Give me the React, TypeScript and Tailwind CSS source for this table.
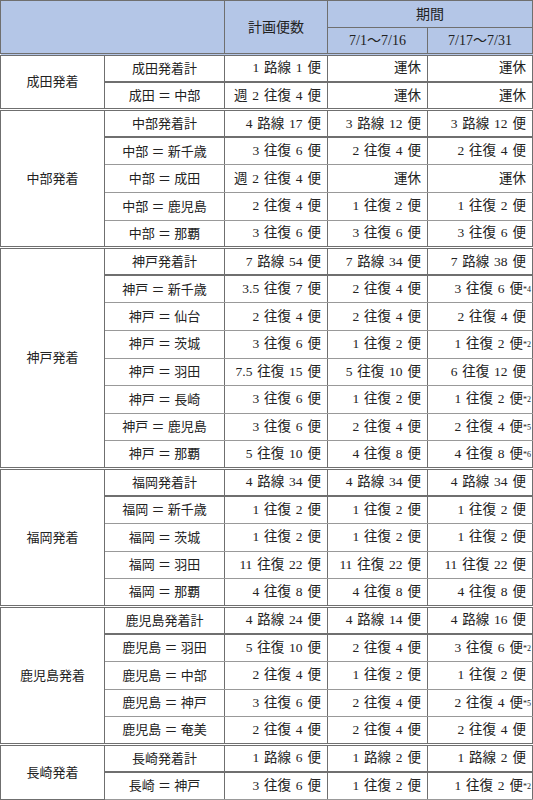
type Row = {
    route: string;
    plan: string;
    p1: string;
    p2: string;
    note?: string;
    total?: boolean;
};

type Group = {
    name: string;
    rows: Row[];
};

const groups: Group[] = [
    {
        name: "成田発着",
        rows: [
            { route: "成田発着計", plan: "1 路線 1 便", p1: "運休", p2: "運休", total: true },
            { route: "成田 ＝ 中部", plan: "週 2 往復 4 便", p1: "運休", p2: "運休" },
        ],
    },
    {
        name: "中部発着",
        rows: [
            { route: "中部発着計", plan: "4 路線 17 便", p1: "3 路線 12 便", p2: "3 路線 12 便", total: true },
            { route: "中部 ＝ 新千歳", plan: "3 往復 6 便", p1: "2 往復 4 便", p2: "2 往復 4 便" },
            { route: "中部 ＝ 成田", plan: "週 2 往復 4 便", p1: "運休", p2: "運休" },
            { route: "中部 ＝ 鹿児島", plan: "2 往復 4 便", p1: "1 往復 2 便", p2: "1 往復 2 便" },
            { route: "中部 ＝ 那覇", plan: "3 往復 6 便", p1: "3 往復 6 便", p2: "3 往復 6 便" },
        ],
    },
    {
        name: "神戸発着",
        rows: [
            { route: "神戸発着計", plan: "7 路線 54 便", p1: "7 路線 34 便", p2: "7 路線 38 便", total: true },
            { route: "神戸 ＝ 新千歳", plan: "3.5 往復 7 便", p1: "2 往復 4 便", p2: "3 往復 6 便", note: "*4" },
            { route: "神戸 ＝ 仙台", plan: "2 往復 4 便", p1: "2 往復 4 便", p2: "2 往復 4 便" },
            { route: "神戸 ＝ 茨城", plan: "3 往復 6 便", p1: "1 往復 2 便", p2: "1 往復 2 便", note: "*2" },
            { route: "神戸 ＝ 羽田", plan: "7.5 往復 15 便", p1: "5 往復 10 便", p2: "6 往復 12 便" },
            { route: "神戸 ＝ 長崎", plan: "3 往復 6 便", p1: "1 往復 2 便", p2: "1 往復 2 便", note: "*2" },
            { route: "神戸 ＝ 鹿児島", plan: "3 往復 6 便", p1: "2 往復 4 便", p2: "2 往復 4 便", note: "*5" },
            { route: "神戸 ＝ 那覇", plan: "5 往復 10 便", p1: "4 往復 8 便", p2: "4 往復 8 便", note: "*6" },
        ],
    },
    {
        name: "福岡発着",
        rows: [
            { route: "福岡発着計", plan: "4 路線 34 便", p1: "4 路線 34 便", p2: "4 路線 34 便", total: true },
            { route: "福岡 ＝ 新千歳", plan: "1 往復 2 便", p1: "1 往復 2 便", p2: "1 往復 2 便" },
            { route: "福岡 ＝ 茨城", plan: "1 往復 2 便", p1: "1 往復 2 便", p2: "1 往復 2 便" },
            { route: "福岡 ＝ 羽田", plan: "11 往復 22 便", p1: "11 往復 22 便", p2: "11 往復 22 便" },
            { route: "福岡 ＝ 那覇", plan: "4 往復 8 便", p1: "4 往復 8 便", p2: "4 往復 8 便" },
        ],
    },
    {
        name: "鹿児島発着",
        rows: [
            { route: "鹿児島発着計", plan: "4 路線 24 便", p1: "4 路線 14 便", p2: "4 路線 16 便", total: true },
            { route: "鹿児島 ＝ 羽田", plan: "5 往復 10 便", p1: "2 往復 4 便", p2: "3 往復 6 便", note: "*2" },
            { route: "鹿児島 ＝ 中部", plan: "2 往復 4 便", p1: "1 往復 2 便", p2: "1 往復 2 便" },
            { route: "鹿児島 ＝ 神戸", plan: "3 往復 6 便", p1: "2 往復 4 便", p2: "2 往復 4 便", note: "*5" },
            { route: "鹿児島 ＝ 奄美", plan: "2 往復 4 便", p1: "2 往復 4 便", p2: "2 往復 4 便" },
        ],
    },
    {
        name: "長崎発着",
        rows: [
            { route: "長崎発着計", plan: "1 路線 6 便", p1: "1 路線 2 便", p2: "1 路線 2 便", total: true },
            { route: "長崎 ＝ 神戸", plan: "3 往復 6 便", p1: "1 往復 2 便", p2: "1 往復 2 便", note: "*2" },
        ],
    },
];

function App() {
    return (
        <div
            className="w-[533px] bg-white text-[13px] text-[#222]"
            style={{ fontFamily: '"Liberation Serif", "Noto Sans CJK JP", serif' }}
        >
            <table className="w-[532px] table-fixed border-collapse">
                <colgroup>
                    <col className="w-[104px]" />
                    <col className="w-[120px]" />
                    <col className="w-[103px]" />
                    <col className="w-[100px]" />
                    <col className="w-[105px]" />
                </colgroup>
                <thead>
                    <tr className="h-[27px] bg-[#b4c6e7]">
                        <th colSpan={2} rowSpan={2} className="border border-b-2 border-[#6f6f6f]"></th>
                        <th rowSpan={2} className="border border-b-2 border-[#6f6f6f] text-[14px] font-normal">
                            計画便数
                        </th>
                        <th colSpan={2} className="border border-[#6f6f6f] text-[14px] font-normal">
                            期間
                        </th>
                    </tr>
                    <tr className="h-[27px] bg-[#b4c6e7]">
                        <th className="border border-b-2 border-[#6f6f6f] text-[14px] font-normal">7/1～7/16</th>
                        <th className="border border-b-2 border-[#6f6f6f] text-[14px] font-normal">7/17～7/31</th>
                    </tr>
                </thead>
                <tbody>
                    {groups.map((group) =>
                        group.rows.map((row, i) => {
                            const top = i === 0 ? "border-t-[3px] border-t-[#6f6f6f] border-double" : "";
                            const bottom = row.total ? "border-b-2 border-b-[#6f6f6f]" : "border-b border-b-[#999]";
                            return (
                                <tr key={group.name + i} className="h-[27.6px]">
                                    {i === 0 && (
                                        <td
                                            rowSpan={group.rows.length}
                                            className="border-x border-x-[#6f6f6f] border-t-[3px] border-double border-t-[#6f6f6f] border-b border-b-[#6f6f6f] text-center align-middle"
                                        >
                                            {group.name}
                                        </td>
                                    )}
                                    <td className={`border-x border-x-[#6f6f6f] text-center ${top} ${bottom}`}>
                                        {row.route}
                                    </td>
                                    <td className={`border-x border-x-[#6f6f6f] pr-[6px] text-right text-[13.5px] [word-spacing:1.5px] ${top} ${bottom}`}>
                                        {row.plan}
                                    </td>
                                    <td className={`border-x border-x-[#6f6f6f] pr-[6px] text-right text-[13.5px] [word-spacing:1.5px] ${top} ${bottom}`}>
                                        {row.p1}
                                    </td>
                                    <td className={`border-x border-x-[#6f6f6f] pr-[6px] text-right text-[13.5px] [word-spacing:1.5px] ${top} ${bottom}`}>
                                        {row.p2}
                                        {row.note && (
                                            <sup className="relative -top-[1px] mr-[-5px] text-[8px]">{row.note}</sup>
                                        )}
                                    </td>
                                </tr>
                            );
                        }),
                    )}
                </tbody>
            </table>
        </div>
    );
}

export default App;
